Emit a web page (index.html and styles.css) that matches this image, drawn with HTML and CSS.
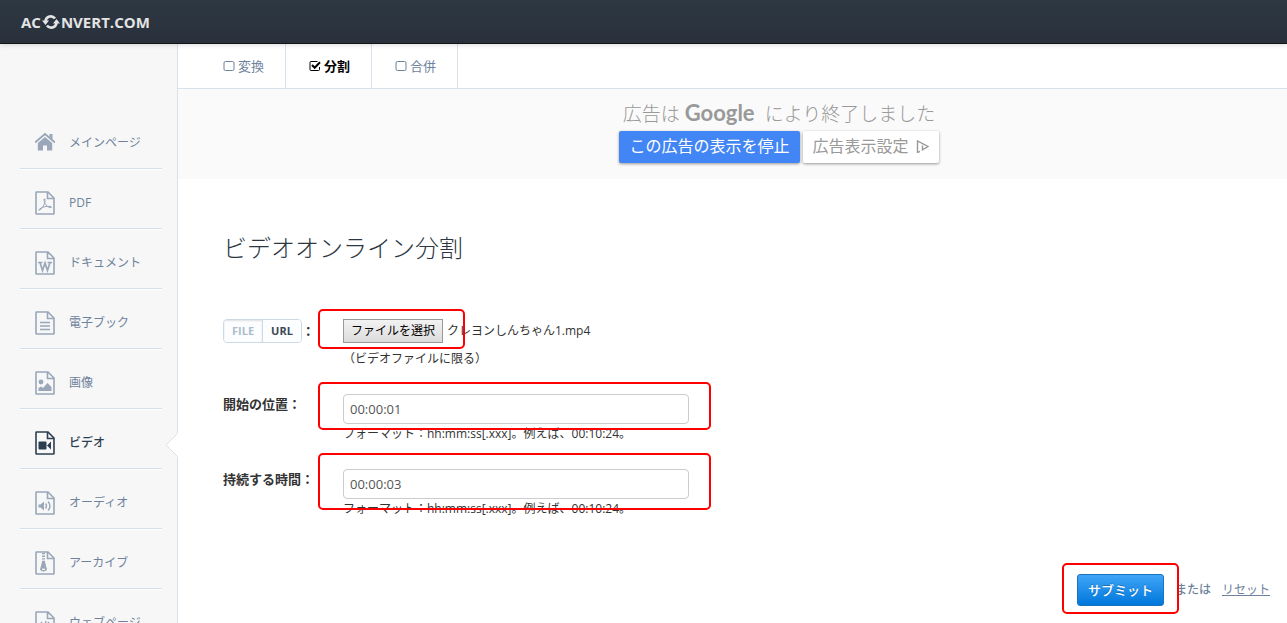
FILE: index.html
```html
<!DOCTYPE html>
<html lang="ja">
<head>
<meta charset="utf-8">
<title>ビデオオンライン分割</title>
<link rel="stylesheet" href="styles.css">
</head>
<body>
<svg class="defs" aria-hidden="true">
  <symbol id="file" viewBox="0 0 20 24">
    <path d="M1 1.500Q1 1 1.500 1H13L19 7V22.500Q19 23 18.500 23H1.500Q1 23 1 22.500ZM12.500 1V7.500H19" fill="none" stroke="currentColor" stroke-width="1.600"/>
  </symbol>
  <symbol id="box" viewBox="0 0 12 12">
    <rect x="1" y="1.500" width="10" height="9" rx="1.500" fill="none" stroke="currentColor"/>
  </symbol>
</svg>
<header class="topbar">
  <a class="brand" href="#">AC<svg class="brand-icon" viewBox="0 0 18 14" aria-hidden="true"><path d="M3.500 6A5.300 5.300 0 0 1 13 3.500M14.500 8A5.300 5.300 0 0 1 5 10.500" fill="none" stroke="currentColor" stroke-width="2.600"/><path d="M0 5.500H7L3.500 10ZM18 8.500H11L14.500 4Z" fill="currentColor"/></svg>NVERT.COM</a>
</header>
<div class="layout">
  <nav class="sidebar">
    <a class="item" href="#"><svg class="icon" viewBox="0 0 20 24" aria-hidden="true"><path d="M10 6 2.800 12V19.500H8V14.500H12V19.500H17.200V12Z" fill="currentColor"/><path d="M0 11.500 10 3 20 11.500" fill="none" stroke="currentColor" stroke-width="1.800"/><path d="M14.500 3H17.500V9L14.500 6Z" fill="currentColor"/></svg>メインページ</a>
    <a class="item" href="#"><svg class="icon" viewBox="0 0 20 24" aria-hidden="true"><use href="#file"/><path d="M9 8Q10.500 7 10 10.500C9.500 13.500 7 18 4.500 19.200Q3 19.500 4.500 18C8 15.500 12 15 16 15.500Q17.500 16.500 15 16.500C12 16 9 12.500 9 8Z" fill="none" stroke="currentColor"/></svg>PDF</a>
    <a class="item" href="#"><svg class="icon" viewBox="0 0 20 24" aria-hidden="true"><use href="#file"/><path d="M3 11.500H7.500M12.500 11.500H17M5 11.500 7.500 19.500 10 12 12.500 19.500 15 11.500" fill="none" stroke="currentColor" stroke-width="1.700"/></svg>ドキュメント</a>
    <a class="item" href="#"><svg class="icon" viewBox="0 0 20 24" aria-hidden="true"><use href="#file"/><path d="M5 11.500H15M5 15H15M5 18.500H15" fill="none" stroke="currentColor" stroke-width="1.400"/></svg>電子ブック</a>
    <a class="item" href="#"><svg class="icon" viewBox="0 0 20 24" aria-hidden="true"><use href="#file"/><circle cx="6" cy="11" r="2.400" fill="currentColor"/><path d="M3.500 20V17L6 15.500 8 17 12.500 12 16.500 16V20Z" fill="currentColor"/></svg>画像</a>
    <a class="item active" href="#"><svg class="icon" viewBox="0 0 20 24" aria-hidden="true"><use href="#file"/><rect x="3.500" y="10.500" width="8" height="8" rx="1" fill="currentColor"/><path d="M12 14.500 16 10.500V18.500Z" fill="currentColor"/></svg>ビデオ<svg class="pointer" viewBox="0 0 13 24" aria-hidden="true"><path d="M13 0 1 12 13 24Z" fill="#fff"/><path d="M12 1 1 12 12 23" fill="none" stroke="#d9e1ea"/></svg></a>
    <a class="item" href="#"><svg class="icon" viewBox="0 0 20 24" aria-hidden="true"><use href="#file"/><path d="M3.500 13.500H5.500L9 10.500V19.500L5.500 16.500H3.500Z" fill="currentColor"/><path d="M10.500 12.500Q12.500 15 10.500 17.500M13 10.500Q17 15 13 19.500" fill="none" stroke="currentColor" stroke-width="1.400"/></svg>オーディオ</a>
    <a class="item" href="#"><svg class="icon" viewBox="0 0 20 24" aria-hidden="true"><use href="#file"/><path d="M8.500 2V13" fill="none" stroke="currentColor" stroke-width="3" stroke-dasharray="1.300 1.300"/><path d="M7 11H10L12 18.500Q11 20.500 8.500 20.500T5 18.500Z" fill="currentColor"/><path d="M7 18.300H10" stroke="#f7f7f7" stroke-width="1.300"/></svg>アーカイブ</a>
    <a class="item" href="#"><svg class="icon" viewBox="0 0 20 24" aria-hidden="true"><use href="#file"/><path d="M7 11 4 14.500 7 18M13 11 16 14.500 13 18M11 10 9 19" fill="none" stroke="currentColor" stroke-width="1.400"/></svg>ウェブページ</a>
  </nav>
  <main class="main">
    <nav class="tabs">
      <a class="tab" href="#"><svg class="tick" aria-hidden="true"><use href="#box"/></svg>変換</a>
      <a class="tab current" href="#"><svg class="tick" viewBox="0 0 12 12" aria-hidden="true"><path d="M10.500 7V9.500Q10.500 10.500 9.500 10.500H2Q1 10.500 1 9.500V2.500Q1 1.500 2 1.500H8.500" fill="none" stroke="currentColor"/><path d="M3 5 5.700 7.800 11 2.200" fill="none" stroke="currentColor" stroke-width="2"/></svg>分割</a>
      <a class="tab" href="#"><svg class="tick" aria-hidden="true"><use href="#box"/></svg>合併</a>
    </nav>
    <section class="ad">
      <p class="ad-title">広告は<span class="google">Google</span>により終了しました</p>
      <div class="ad-actions">
        <button class="ad-button stop" type="button">この広告の表示を停止</button>
        <button class="ad-button" type="button">広告表示設定<svg class="adchoices" viewBox="0 0 13 13" aria-hidden="true"><path d="M4 11.500 1.500 12.300V1L12 6.500 6.500 9.800V5.500M6.500 3.200V4.400" fill="none" stroke="currentColor" stroke-width="1.400"/></svg></button>
      </div>
    </section>
    <form class="form">
      <h1 class="title">ビデオオンライン分割</h1>
      <div class="row row-file">
        <div class="source"><span class="toggle"><button class="choice chosen" type="button">FILE</button><button class="choice" type="button">URL</button></span>：</div>
        <div class="field">
          <div class="picker">
            <input id="upload" type="file" hidden>
            <button class="pick" type="button">ファイルを選択</button>
            <span>クレヨンしんちゃん1.mp4</span>
            <span class="mark mark-file"></span>
          </div>
          <p class="note">（ビデオファイルに限る）</p>
        </div>
      </div>
      <div class="row">
        <label class="label" for="start">開始の位置：</label>
        <div class="field">
          <input class="text" id="start" type="text" value="00:00:01">
          <p class="hint">フォーマット：hh:mm:ss[.xxx]。例えば、00:10:24。</p>
          <span class="mark mark-start"></span>
        </div>
      </div>
      <div class="row">
        <label class="label" for="duration">持続する時間：</label>
        <div class="field">
          <input class="text" id="duration" type="text" value="00:00:03">
          <p class="hint">フォーマット：hh:mm:ss[.xxx]。例えば、00:10:24。</p>
          <span class="mark mark-duration"></span>
        </div>
      </div>
      <div class="actions">
        <span class="send"><button class="submit" type="submit">サブミット</button><span class="mark mark-submit"></span></span>
        <span class="or">または</span>
        <a class="reset" href="#">リセット</a>
      </div>
    </form>
  </main>
</div>
</body>
</html>
```
FILE: styles.css
```css
* { box-sizing: border-box; }
html { height: 100%; overflow: hidden; }
body {
  margin: 0;
  height: 100%;
  overflow: hidden;
  display: flex;
  flex-direction: column;
  background: #fff;
  color: #333;
  font: 12px/20px "Open Sans", "Noto Sans CJK JP", sans-serif;
}
a { color: inherit; text-decoration: none; }
p, h1 { margin: 0; }
button, input { font: inherit; color: inherit; }
svg { flex: none; }
.defs { position: absolute; width: 0; height: 0; }

.topbar {
  flex: none;
  height: 44px;
  padding-left: 21px;
  display: flex;
  align-items: center;
  background: linear-gradient(#2d3843, #29303b);
  border-bottom: 1px solid #12161b;
  box-shadow: 0 1px 5px rgba(0, 0, 0, .15);
  z-index: 1;
}
.brand { display: flex; align-items: center; color: #e4e4e4; font-size: 15px; font-weight: 700; }
.brand-icon { width: 18px; height: 14px; margin: 0 1px; }

.layout { flex: 1; min-height: 0; display: flex; }
.sidebar {
  flex: none;
  width: 178px;
  padding: 65px 15px 0 20px;
  background: #f7f7f7;
  border-right: 1px solid #d9e1ea;
}
.item {
  position: relative;
  height: 60px;
  padding: 8px 0 0 15px;
  display: flex;
  align-items: center;
  gap: 14px;
  border-bottom: 1px solid #d5dfe9;
  box-shadow: 0 1px 0 #fff;
  color: #6e829c;
}
.icon { width: 20px; height: 24px; color: #99a7b9; }
.active, .active .icon { color: #2c3e50; font-weight: 500; }
.pointer { position: absolute; right: -16px; top: 24px; width: 13px; height: 24px; }

.main { flex: 1; min-width: 0; }
.tabs { display: flex; height: 45px; padding-left: 22px; border-bottom: 1px solid #d9e1ea; }
.tab {
  padding: 0 21px 0 23px;
  display: flex;
  align-items: center;
  gap: 3px;
  border-right: 1px solid #d9e1ea;
  color: #6e829c;
  font-size: 13px;
}
.current { color: #000; font-weight: 700; }
.tick { width: 12px; height: 12px; }

.ad {
  height: 90px;
  padding: 13px 0 0 93px;
  display: flex;
  flex-direction: column;
  align-items: center;
  background: #fafafa;
  color: #999;
}
.ad-title { display: flex; align-items: baseline; font-size: 19px; line-height: 22px; font-weight: 300; }
.google { margin: 0 10px 0 5px; font-family: Lato, sans-serif; font-size: 22px; font-weight: 700; }
.ad-actions { display: flex; gap: 3px; padding-top: 6px; }
.ad-button {
  height: 32px;
  padding: 0 10px 2px;
  display: flex;
  align-items: center;
  gap: 7px;
  border: 0;
  border-radius: 2px;
  background: #fff;
  box-shadow: 0 1px 3px rgba(0, 0, 0, .4);
  color: #999;
  font-size: 16px;
}
.stop { background: #4285f4; color: #fff; }
.adchoices { width: 13px; height: 13px; }

.form { padding: 51px 17px 0 45px; }
.title { margin-bottom: 53px; color: #2d3743; font-size: 24px; line-height: 36px; font-weight: 300; }
.row { display: grid; grid-template-columns: 120px 1fr; min-height: 75px; }
.label, .source { font-size: 13px; font-weight: 700; }
.source { height: 24px; display: flex; align-items: center; }
.toggle { display: flex; height: 24px; border: 1px solid #ccdae6; border-radius: 4px; overflow: hidden; }
.choice {
  padding: 0 8px;
  border: 0;
  background: #fcfdfe;
  color: #3b4754;
  font-size: 11px;
  font-weight: 700;
}
.chosen { border-right: 1px solid #ccdae6; color: #adbccb; box-shadow: inset 0 1px 2px rgba(0, 0, 0, .12); }
.field, .picker, .send { position: relative; }
.picker { display: flex; align-items: center; gap: 4px; }
.pick {
  width: 100px;
  height: 24px;
  padding: 0;
  border: 1px solid #999;
  background: linear-gradient(#f2f2f2, #dcdcdc);
  color: #000;
}
.note { margin-top: 6px; }
.text {
  display: block;
  width: 346px;
  max-width: 100%;
  height: 30px;
  padding: 0 6px;
  border: 1px solid #ccc;
  border-radius: 4px;
  color: #555;
  font-size: 13px;
}
.mark { position: absolute; border: 2px solid #f00; border-radius: 5px; pointer-events: none; }
.mark-file { left: -25px; top: -10px; width: 147px; height: 40px; }
.mark-start { left: -25px; top: -12px; width: 393px; height: 48px; }
.mark-duration { left: -25px; top: -16px; width: 393px; height: 57px; }
.mark-submit { inset: -11px -15px -8px -15px; }

.actions { display: flex; align-items: center; justify-content: flex-end; margin-top: 30px; color: #6e829c; }
.submit {
  display: block;
  height: 32px;
  padding: 0 10px;
  border: 1px solid #1a73bd;
  border-radius: 3px;
  background: linear-gradient(#3fa5f8, #0077db);
  color: #fff;
  font-size: 13px;
  font-weight: 500;
  text-shadow: 0 -1px 0 rgba(0, 0, 0, .25);
}
.or { margin: 0 11px; font-weight: 500; }
.reset { text-decoration: underline; }
```
